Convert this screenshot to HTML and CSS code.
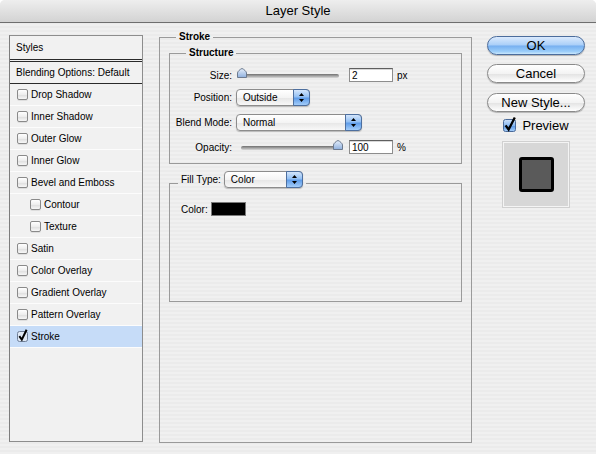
FILE: index.html
```html
<!DOCTYPE html>
<html>
<head>
<meta charset="utf-8">
<title>Layer Style</title>
<link rel="stylesheet" href="styles.css">
</head>
<body>
<div class="window">
  <header class="titlebar">Layer Style</header>
  <main class="main">
    <nav class="styles-panel">
      <div class="row head">Styles</div>
      <div class="row blend">Blending Options: Default</div>
      <div class="row"><span class="cb"></span>Drop Shadow</div>
      <div class="row"><span class="cb"></span>Inner Shadow</div>
      <div class="row"><span class="cb"></span>Outer Glow</div>
      <div class="row"><span class="cb"></span>Inner Glow</div>
      <div class="row"><span class="cb"></span>Bevel and Emboss</div>
      <div class="row sub"><span class="cb"></span>Contour</div>
      <div class="row sub"><span class="cb"></span>Texture</div>
      <div class="row"><span class="cb"></span>Satin</div>
      <div class="row"><span class="cb"></span>Color Overlay</div>
      <div class="row"><span class="cb"></span>Gradient Overlay</div>
      <div class="row"><span class="cb"></span>Pattern Overlay</div>
      <div class="row sel">
        <svg class="cb-on" width="11" height="11" viewBox="0 0 11 11"><rect x=".5" y=".5" width="10" height="10" rx="2" fill="#dfe9f6" stroke="#6f7f97"/><path d="M2.3 5.2 L4.8 8.6 L9.6 -1.2" fill="none" stroke="#000" stroke-width="2"/></svg>Stroke
      </div>
    </nav>

    <fieldset class="group stroke">
      <legend class="legend">Stroke</legend>

      <fieldset class="group structure">
        <legend class="legend">Structure</legend>
        <div class="field f-size">
          <span class="lbl">Size:</span>
          <div class="slider">
            <span class="track"></span>
            <svg class="thumb at-start" width="10" height="10" viewBox="0 0 10 10"><defs><linearGradient id="tg" x1="0" y1="0" x2="0" y2="1"><stop offset="0" stop-color="#e6effb"/><stop offset="1" stop-color="#8fb0de"/></linearGradient></defs><path d="M.5 9.5V5C.5 3.6 3 1.2 5 .5C7 1.2 9.5 3.6 9.5 5V9.5Z" fill="url(#tg)" stroke="#6c7a8f"/></svg>
          </div>
          <input class="num" type="text" value="2" readonly>
          <span class="unit">px</span>
        </div>
        <div class="field f-pos">
          <span class="lbl">Position:</span>
          <div class="popup w-pos"><span class="ptxt">Outside</span><span class="arrows"><svg width="5" height="9" viewBox="0 0 5 9"><path d="M2.5 0L5 3H0Z M2.5 9L5 6H0Z" fill="#000"/></svg></span></div>
        </div>
        <div class="field f-blend">
          <span class="lbl">Blend Mode:</span>
          <div class="popup w-blend"><span class="ptxt">Normal</span><span class="arrows"><svg width="5" height="9" viewBox="0 0 5 9"><path d="M2.5 0L5 3H0Z M2.5 9L5 6H0Z" fill="#000"/></svg></span></div>
        </div>
        <div class="field f-op">
          <span class="lbl">Opacity:</span>
          <div class="slider">
            <span class="track"></span>
            <svg class="thumb at-end" width="10" height="10" viewBox="0 0 10 10"><path d="M.5 9.5V5C.5 3.6 3 1.2 5 .5C7 1.2 9.5 3.6 9.5 5V9.5Z" fill="url(#tg)" stroke="#6c7a8f"/></svg>
          </div>
          <input class="num" type="text" value="100" readonly>
          <span class="unit">%</span>
        </div>
      </fieldset>

      <fieldset class="group fill">
        <legend class="legend fill-legend">
          <span class="fill-lbl">Fill Type:</span>
          <span class="popup w-fill"><span class="ptxt">Color</span><span class="arrows"><svg width="5" height="9" viewBox="0 0 5 9"><path d="M2.5 0L5 3H0Z M2.5 9L5 6H0Z" fill="#000"/></svg></span></span>
        </legend>
        <div class="color-row">
          <span>Color:</span><span class="swatch"></span>
        </div>
      </fieldset>
    </fieldset>

    <aside class="actions">
      <button class="btn default">OK</button>
      <button class="btn">Cancel</button>
      <button class="btn">New Style...</button>
      <div class="check-row">
        <svg class="pv-box" width="13" height="13" viewBox="0 0 13 13"><defs><linearGradient id="bg" x1="0" y1="0" x2="0" y2="1"><stop offset="0" stop-color="#cfe2fa"/><stop offset=".5" stop-color="#8ab9f1"/><stop offset=".55" stop-color="#5e9ae6"/><stop offset="1" stop-color="#a8d0fa"/></linearGradient></defs><rect x=".5" y=".5" width="12" height="12" rx="2" fill="url(#bg)" stroke="#4a6a99"/><path d="M2.6 6.4 L5.6 10.6 L11.8 -1.6" fill="none" stroke="#000" stroke-width="2.3"/></svg>
        <span>Preview</span>
      </div>
      <div class="preview">
        <span class="preview-square"></span>
      </div>
    </aside>
  </main>
</div>
</body>
</html>
```

FILE: styles.css
```css
* {
  box-sizing: border-box;
}

html {
  background: #ffffff;
}

body {
  margin: 0;
  width: 596px;
  height: 454px;
  overflow: hidden;
  font-family: "Liberation Sans", Arial, sans-serif;
  color: #000;
}

.window {
  height: 454px;
  border-radius: 5px 5px 0 0;
  overflow: hidden;
  background: repeating-linear-gradient(to bottom, #f0f0f0 0 2px, #ebebeb 2px 4px);
}

.titlebar {
  height: 23px;
  border-bottom: 1px solid #6f6f6f;
  background: linear-gradient(#eeeeee, #d3d3d3);
  font-size: 13px;
  line-height: 22px;
  text-align: center;
}

.main {
  display: flex;
  align-items: flex-start;
  padding-left: 9px;
}

/* ---------- left styles list ---------- */
.styles-panel {
  width: 134px;
  height: 407px;
  margin-top: 12px;
  border: 1px solid #8d8d8d;
  border-left-color: #7d7d7d;
  background: #f1f1f1;
  font-size: 10px;
  flex: none;
}

.row {
  display: flex;
  align-items: center;
  gap: 3px;
  height: 22px;
  padding-left: 7px;
  border-bottom: 1px solid #fcfcfc;
  white-space: nowrap;
}

.row.head {
  height: 26px;
  padding-left: 6px;
  border-bottom: 3px double #2a2a2a;
}

.row.blend {
  padding-left: 6px;
  border-bottom: 1px solid #2a2a2a;
}

.row.sub {
  padding-left: 20px;
}

.row.sel {
  background: #c6dcf8;
}

.cb {
  width: 11px;
  height: 11px;
  border: 1px solid #8a8a8a;
  border-radius: 2px;
  background: linear-gradient(#ffffff, #eeeeee 50%, #dddddd 52%, #f7f7f7);
  box-shadow: 0 1px 0 rgba(0, 0, 0, 0.08);
  flex: none;
}

.cb-on {
  flex: none;
  overflow: visible;
}

/* ---------- group boxes ---------- */
.group {
  margin: 0;
  padding: 0;
  min-width: 0;
  border: 1px solid #9a9a9a;
}

.legend {
  padding: 0 3px;
  font-size: 10px;
  font-weight: bold;
  line-height: 12px;
}

.stroke {
  flex: none;
  width: 313px;
  height: 412px;
  margin: 8px 0 0 16px;
  padding: 0 9px;
}

.stroke > .legend {
  margin-left: 7px;
}

.structure {
  margin-top: 4px;
  padding-bottom: 7px;
}

.structure > .legend {
  margin-left: 16px;
}

.field {
  display: flex;
  align-items: center;
  height: 18px;
  font-size: 10px;
}

.f-size { margin-top: 7px; }
.f-pos { margin-top: 4px; }
.f-blend { margin-top: 7px; }
.f-op { margin-top: 7px; }

.lbl {
  width: 62px;
  margin-right: 4px;
  text-align: right;
  white-space: nowrap;
}

.slider {
  position: relative;
  display: flex;
  align-items: center;
  width: 106px;
  height: 18px;
  margin-left: 1px;
  padding: 0 4px;
}

.track {
  flex: 1;
  height: 4px;
  margin-top: 1px;
  border-radius: 2px;
  background: linear-gradient(#6f6f6f, #a9a9a9 55%, #d9d9d9);
}

.thumb {
  position: absolute;
  top: 2px;
}

.thumb.at-start { left: 0; }
.thumb.at-end { right: 0; }

.num {
  width: 44px;
  height: 14px;
  margin: 0 0 0 6px;
  padding: 0 0 0 2px;
  border: 1px solid #8d8d8d;
  border-top-color: #5f5f5f;
  background: #fff;
  box-shadow: inset 0 1px 0 #d8d8d8;
  font: 10px "Liberation Sans", Arial, sans-serif;
  color: #000;
  outline: none;
}

.unit {
  margin-left: 4px;
}

.popup {
  display: flex;
  height: 17px;
  border: 1px solid #8c8c8c;
  border-radius: 4px;
  background: linear-gradient(#ffffff, #f4f4f4 50%, #e6e6e6 52%, #f8f8f8);
  box-shadow: 0 1px 1px rgba(0, 0, 0, 0.22);
  font-size: 10px;
  font-weight: normal;
  line-height: 15px;
}

.w-pos { width: 74px; }
.w-blend { width: 126px; }
.w-fill { width: 79px; }

.ptxt {
  flex: 1;
  padding-left: 6px;
}

.arrows {
  width: 17px;
  margin: -1px -1px -1px 0;
  display: flex;
  align-items: center;
  justify-content: center;
  border: 1px solid #4d6f9f;
  border-radius: 0 4px 4px 0;
  background: linear-gradient(#d3e5fb, #93c0f4 45%, #5f9ce8 55%, #a3cdfa);
}

.fill {
  height: 131px;
  margin-top: 7px;
}

.fill-legend {
  display: flex;
  align-items: flex-start;
  height: 24px;
  margin-left: 8px;
  font-weight: normal;
}

.fill-lbl {
  line-height: 17px;
  margin-right: 3px;
}

.color-row {
  display: flex;
  align-items: center;
  gap: 3px;
  height: 18px;
  margin: 5px 0 0 11px;
  font-size: 10px;
}

.swatch {
  width: 35px;
  height: 14px;
  background: #000;
  border: 1px solid #7a7a7a;
}

/* ---------- right column ---------- */
.actions {
  flex: none;
  width: 98px;
  margin: 13px 0 0 15px;
  display: flex;
  flex-direction: column;
  align-items: center;
}

.btn {
  width: 98px;
  height: 19px;
  padding: 0;
  border: 1px solid #8a8a8a;
  border-radius: 10px;
  background: linear-gradient(#ffffff, #f3f3f3 50%, #e3e3e3 53%, #f6f6f6 85%, #ffffff);
  box-shadow: 0 1px 1px rgba(0, 0, 0, 0.25);
  font: 13px "Liberation Sans", Arial, sans-serif;
  line-height: 17px;
  color: #000;
}

.btn + .btn {
  margin-top: 9px;
}

.btn + .btn + .btn {
  margin-top: 10px;
}

.btn.default {
  border-color: #4b6c9c;
  background: linear-gradient(#dbeafd, #a9cef8 48%, #76aff0 52%, #9bcdf9 85%, #c9e7fd);
}

.check-row {
  display: flex;
  align-items: center;
  gap: 6px;
  height: 14px;
  margin-top: 6px;
  font-size: 13px;
}

.pv-box {
  flex: none;
  overflow: visible;
}

.preview {
  width: 66px;
  height: 65px;
  margin-top: 10px;
  display: flex;
  align-items: center;
  justify-content: center;
  background: #d7d7d7;
  border: 1px solid #f4f4f4;
  box-shadow: 0 0 0 1px #d0d0d0;
}

.preview-square {
  width: 35px;
  height: 35px;
  border: 3px solid #000;
  border-radius: 3px;
  background: #5a5a5a;
}
```
